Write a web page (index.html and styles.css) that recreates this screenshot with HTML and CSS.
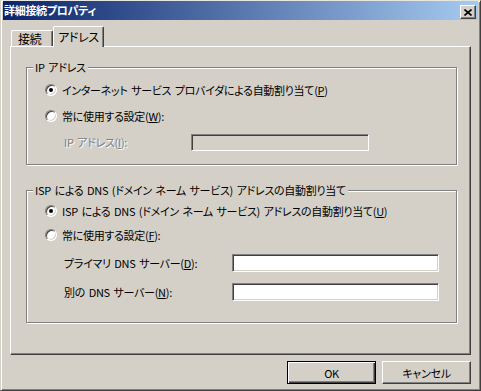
FILE: index.html
```html
<!DOCTYPE html>
<html lang="ja">
<head>
  <meta charset="UTF-8" />
  <title>詳細接続プロパティ</title>
  <link rel="stylesheet" href="styles.css">
</head>
<body>
  <div class="window">
    <!-- Title bar -->
    <div class="titlebar">
      <span class="title">詳細接続プロパティ</span>
      <span class="close-btn">
        <svg width="8" height="7" viewBox="0 0 8 7"><path d="M0.5 0.5 L7.5 6.5 M7.5 0.5 L0.5 6.5" stroke="#000" stroke-width="1.6" fill="none"/></svg>
      </span>
    </div>

    <div class="content">
      <!-- Tabs -->
      <div class="tabs">
        <div class="tab">接続</div>
        <div class="tab active">アドレス</div>
      </div>

      <div class="panel">
        <!-- IP address group -->
        <div class="group group-ip">
          <span class="legend">IP アドレス</span>
          <div class="row radio-row"><span class="radio on"></span>インターネット サービス プロバイダによる自動割り当て(<u>P</u>)</div>
          <div class="row radio-row"><span class="radio"></span>常に使用する設定(<u>W</u>):</div>
          <div class="row sub-row">
            <span class="field-label ip-label disabled">IP アドレス(<u>I</u>):</span>
            <span class="textbox ip-box disabled-box"></span>
          </div>
        </div>

        <!-- DNS group -->
        <div class="group group-dns">
          <span class="legend">ISP による DNS (ドメイン ネーム サービス) アドレスの自動割り当て</span>
          <div class="row radio-row first"><span class="radio on"></span>ISP による DNS (ドメイン ネーム サービス) アドレスの自動割り当て(<u>U</u>)</div>
          <div class="row radio-row second"><span class="radio"></span>常に使用する設定(<u>F</u>):</div>
          <div class="row sub-row dns1">
            <span class="field-label dns-label">プライマリ DNS サーバー(<u>D</u>):</span>
            <span class="textbox dns-box"></span>
          </div>
          <div class="row sub-row dns2">
            <span class="field-label dns-label">別の DNS サーバー(<u>N</u>):</span>
            <span class="textbox dns-box"></span>
          </div>
        </div>
      </div>

      <!-- Dialog buttons -->
      <div class="buttons">
        <button class="btn default">OK</button>
        <button class="btn">キャンセル</button>
      </div>
    </div>
  </div>
</body>
</html>
```

FILE: styles.css
```css
/* Classic Windows 2000 dialog */
* {
  box-sizing: border-box;
}
body {
  margin: 0;
  background-color: #d4d0c8;
  font-family: "Noto Sans CJK JP", "Liberation Sans", sans-serif;
  font-size: 11px;
  letter-spacing: -0.3px;
  word-spacing: 1.5px;
  font-feature-settings: "palt";
  color: #000;
}
.window {
  width: 481px;
  height: 391px;
  border: 1px solid;
  border-color: #e8e6e0 #404040 #404040 #d4d0c8;
  box-shadow: inset 1px 1px #fff, inset -1px -1px #808080;
  padding: 0 2px;
  display: flex;
  flex-direction: column;
}
/* Title bar */
.titlebar {
  height: 19px;
  background: linear-gradient(to right, #0a246a, #a6caf0);
  display: flex;
  align-items: center;
  justify-content: space-between;
  padding: 0 2px 0 1px;
}
.title {
  color: #fff;
  font-weight: bold;
  font-size: 11px;
  line-height: 19px;
}
.close-btn {
  width: 16px;
  height: 14px;
  margin-top: 3px;
  background-color: #d4d0c8;
  border: 1px solid;
  border-color: #fff #404040 #404040 #fff;
  box-shadow: inset -1px -1px #808080;
  display: flex;
  align-items: center;
  justify-content: center;
}
.close-btn svg {
  display: block;
}
/* Body */
.content {
  padding: 6px 7px 0 7px;
}
.tabs {
  display: flex;
  align-items: flex-end;
  height: 20px;
  padding-left: 1px;
}
.tab {
  height: 16px;
  padding: 0 6px;
  border: 1px solid;
  border-bottom: none;
  border-color: #fff #404040 #fff #fff;
  border-radius: 2px 2px 0 0;
  box-shadow: inset -1px 0 #808080;
  line-height: 15px;
  font-size: 12px;
}
.tab:first-child {
  width: 42px;
  padding: 0 0 0 6px;
}
.tab.active {
  height: 21px;
  width: 51px;
  margin-bottom: -1px;
  background-color: #d4d0c8;
  position: relative;
  z-index: 1;
  line-height: 19px;
  text-align: center;
  padding: 0;
}
.panel {
  height: 309px;
  border: 1px solid;
  border-color: #fff #404040 #404040 #fff;
  box-shadow: inset -1px -1px #808080;
  padding-left: 15px;
}
/* Group boxes */
.group {
  position: relative;
  width: 431px;
  border: 1px solid #808080;
  box-shadow: 1px 1px 0 #fff, inset 1px 1px 0 #fff;
  display: flex;
  flex-direction: column;
}
.group-ip {
  margin-top: 20px;
  height: 98px;
  padding-top: 12px;
  gap: 6px;
}
.group-dns {
  margin-top: 25px;
  height: 133px;
  padding-top: 10px;
}
.legend {
  position: absolute;
  top: -8px;
  left: 6px;
  padding: 0 2px;
  line-height: 14px;
  background-color: #d4d0c8;
  white-space: nowrap;
}
.row {
  height: 20px;
  display: flex;
  align-items: center;
  white-space: nowrap;
}
.radio-row {
  padding-left: 18px;
}
.sub-row {
  padding-left: 37px;
}
.group-dns .second {
  margin-top: 4px;
}
.group-dns .dns1 {
  margin-top: 8px;
}
.group-dns .dns2 {
  margin-top: 9px;
}
u {
  text-decoration-thickness: 1px;
  text-underline-offset: 1px;
}
/* Radio button */
.radio {
  position: relative;
  width: 12px;
  height: 12px;
  margin-right: 5px;
  border-radius: 50%;
  border: 1px solid;
  border-color: #808080 #fff #fff #808080;
  background-color: #fff;
  box-shadow: inset 1px 1px #404040, inset -1px -1px #d4d0c8;
  flex-shrink: 0;
}
.radio.on::after {
  content: "";
  position: absolute;
  left: 3px;
  top: 3px;
  width: 4px;
  height: 4px;
  border-radius: 50%;
  background-color: #000;
}
/* Text fields */
.field-label.ip-label {
  width: 127px;
}
.field-label.dns-label {
  width: 168px;
}
.disabled {
  color: #808080;
  text-shadow: 1px 1px 0 #fff;
}
.textbox {
  display: block;
  border: 1px solid;
  border-color: #808080 #fff #fff #808080;
  box-shadow: inset 1px 1px #404040, inset -1px -1px #d4d0c8;
  background-color: #fff;
}
.ip-box {
  width: 178px;
  height: 17px;
}
.disabled-box {
  background-color: #d4d0c8;
}
.dns-box {
  width: 207px;
  height: 18px;
}
/* Dialog buttons */
.buttons {
  display: flex;
  justify-content: flex-end;
  gap: 6px;
  margin-top: 6px;
}
.btn {
  width: 89px;
  height: 23px;
  padding: 0;
  font-family: inherit;
  font-size: 11px;
  letter-spacing: -0.3px;
  font-feature-settings: "palt";
  color: #000;
  background-color: #d4d0c8;
  border: 1px solid;
  border-color: #fff #404040 #404040 #fff;
  box-shadow: inset -1px -1px #808080;
  border-radius: 0;
}
.btn.default {
  border: 1px solid #000;
  box-shadow: inset 1px 1px #fff, inset -1px -1px #404040, inset -2px -2px #808080;
}
```
